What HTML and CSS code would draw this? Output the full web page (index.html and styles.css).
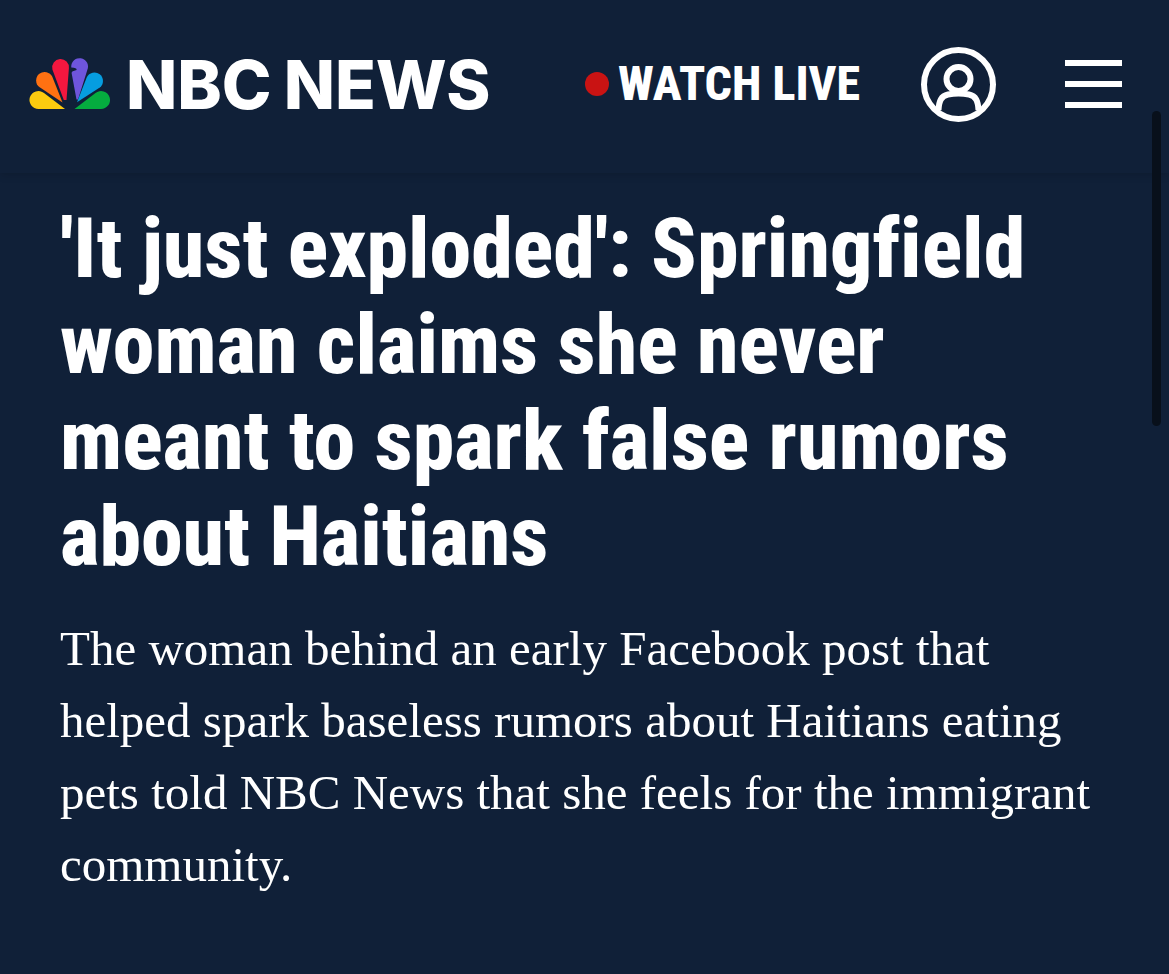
FILE: index.html
```html
<!DOCTYPE html>
<html lang="en">
<head>
    <meta charset="UTF-8">
    <meta name="viewport" content="width=device-width, initial-scale=1.0">
    <title>NBC News</title>
    <link rel="stylesheet" href="styles.css">
</head>
<body>
    <header class="site-header">
        <a class="logo" href="#">
            <svg class="peacock" viewBox="0 0 82 52" aria-hidden="true">
                <path fill="#fccb0f" d="M36 51H9.5A9 9 0 1 1 15 34.9Z"/>
                <path fill="#ff7112" d="M33.5 44.5L10.3 29.1A8.5 8.5 0 1 1 23.3 18.8Z"/>
                <path fill="#f3173f" d="M34.8 42L23.4 11.4A8.4 8.4 0 1 1 39.9 10.2L37.5 42Z"/>
                <path fill="#6e55dc" d="M47.5 41.5L42.6 15C42.8 13.5 44 13 47.6 12C47.8 10.6 46.5 10 42.3 9.6A8.4 8.4 0 1 1 58.3 12L49 41.5Z"/>
                <path fill="#069de0" d="M48 44.3L57.8 19.3A8.5 8.5 0 1 1 70.8 29.6Z"/>
                <path fill="#05ac3f" d="M45.5 51H71.8A9 9 0 1 0 66.5 34.9Z"/>
            </svg>
            <span class="wordmark"><span>NBC</span> <span>NEWS</span></span>
        </a>

        <nav class="tools">
            <a class="watch-live" href="#"><span class="live-dot"></span>WATCH LIVE</a>
            <button class="icon-btn" type="button" aria-label="Profile">
                <svg class="icon-user" viewBox="0 0 75 75" fill="none" stroke="#fff" stroke-width="6">
                    <circle cx="37.5" cy="37.5" r="34.5"/>
                    <circle cx="37.5" cy="32" r="12"/>
                    <path d="M17.5 63C18 54 20 49 27 47.5C34 46.3 41 46.3 48 47.5C55 49 57 54 57.5 63"/>
                </svg>
            </button>
            <button class="icon-btn" type="button" aria-label="Menu">
                <svg class="icon-menu" viewBox="0 0 57 48" fill="#fff">
                    <path d="M0 0H57V6H0ZM0 21H57V27H0ZM0 42H57V48H0Z"/>
                </svg>
            </button>
        </nav>
    </header>

    <main class="article">
        <h1>'It just exploded': Springfield woman claims she never meant to spark false rumors about Haitians</h1>
        <p class="dek">The woman behind an early Facebook post that helped spark baseless rumors about Haitians eating pets told NBC News that she feels for the immigrant community.</p>
    </main>

    <div class="scroll-thumb"></div>
</body>
</html>
```
FILE: styles.css
```css
* {
    box-sizing: border-box;
}

body {
    margin: 0;
    background-color: #102038;
    color: #fff;
}

a {
    color: inherit;
    text-decoration: none;
}

.site-header {
    display: flex;
    justify-content: space-between;
    align-items: center;
    height: 173px;
    padding: 0 47px 5px 29px;
    box-shadow: 0 2px 8px rgba(0, 0, 0, 0.15);
}

.logo {
    display: flex;
    align-items: center;
    gap: 15px;
}

.peacock {
    width: 82px;
    height: 52px;
}

.wordmark {
    display: flex;
    gap: 12px;
    padding-top: 2px;
    font-family: Inter, sans-serif;
    font-weight: 800;
    font-size: 67px;
    line-height: 72px;
}

.tools {
    display: flex;
    align-items: center;
}

.watch-live {
    display: flex;
    align-items: center;
    gap: 9px;
    margin-right: 61px;
    font-family: "Roboto Condensed", Roboto, sans-serif;
    font-weight: 800;
    font-size: 48px;
    line-height: 56px;
    white-space: nowrap;
}

.live-dot {
    width: 24px;
    height: 24px;
    border-radius: 50%;
    background-color: #c91313;
}

.icon-btn {
    padding: 0;
    border: none;
    background: none;
    cursor: pointer;
}

.icon-btn + .icon-btn {
    margin-left: 69px;
}

.icon-btn svg {
    display: block;
}

.icon-user {
    width: 75px;
    height: 75px;
}

.icon-menu {
    width: 57px;
    height: 48px;
}

.article {
    padding: 28px 60px 60px;
}

h1 {
    max-width: 1000px;
    margin: 0 0 28px;
    font-family: "Roboto Condensed", Roboto, sans-serif;
    font-weight: 800;
    font-size: 84px;
    line-height: 96px;
    font-variant-ligatures: none;
}

.dek {
    margin: 0;
    font-family: "Liberation Serif", serif;
    font-size: 49px;
    line-height: 72px;
}

.scroll-thumb {
    position: fixed;
    top: 111px;
    right: 8px;
    width: 9px;
    height: 315px;
    border-radius: 5px;
    background-color: #08101b;
}
```
